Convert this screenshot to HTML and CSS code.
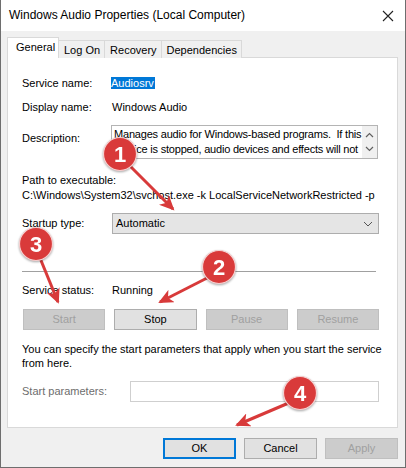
FILE: index.html
```html
<!doctype html>
<html>
  <head>
    <meta charset="utf-8">
    <title>Windows Audio Properties (Local Computer)</title>
    <link rel="stylesheet" href="styles.css">
  </head>
  <body>
    <div class="window">
      <div class="titlebar">
        <span class="title">Windows Audio Properties (Local Computer)</span>
        <svg class="close" width="12" height="12" viewBox="0 0 12 12">
          <path d="M1 1L11 11M11 1L1 11" stroke="#222" stroke-width="1.1" fill="none"/>
        </svg>
      </div>

      <div class="client">
        <div class="tabs">
          <div class="tab selected">General</div>
          <div class="tab">Log On</div>
          <div class="tab">Recovery</div>
          <div class="tab">Dependencies</div>
        </div>

        <div class="panel">
          <div class="row row-name">
            <span class="label">Service name:</span>
            <span class="value"><span class="selection">Audiosrv</span></span>
          </div>
          <div class="row row-display">
            <span class="label">Display name:</span>
            <span class="value">Windows Audio</span>
          </div>
          <div class="row row-desc">
            <span class="label">Description:</span>
            <div class="textbox">
              <div class="textbox-text">
                Manages audio for Windows-based programs.&nbsp; If this<br>
                service is stopped, audio devices and effects will not
              </div>
              <div class="scrollbar">
                <svg width="9" height="6" viewBox="0 0 9 6"><path d="M1 5L4.5 1.5L8 5" stroke="#606060" stroke-width="1.2" fill="none"/></svg>
                <svg width="9" height="6" viewBox="0 0 9 6"><path d="M1 1L4.5 4.5L8 1" stroke="#606060" stroke-width="1.2" fill="none"/></svg>
              </div>
            </div>
          </div>
          <div class="path-label">Path to executable:</div>
          <div class="path-value">C:\Windows\System32\svchost.exe -k LocalServiceNetworkRestricted -p</div>
          <div class="row row-startup">
            <span class="label">Startup type:</span>
            <div class="combo">
              <span>Automatic</span>
              <svg width="10" height="6" viewBox="0 0 10 6"><path d="M1 1L5 5L9 1" stroke="#555" stroke-width="1" fill="none"/></svg>
            </div>
          </div>
          <div class="separator"></div>
          <div class="row row-status">
            <span class="label">Service status:</span>
            <span class="value">Running</span>
          </div>
          <div class="service-buttons">
            <button class="btn" disabled>Start</button>
            <button class="btn">Stop</button>
            <button class="btn" disabled>Pause</button>
            <button class="btn" disabled>Resume</button>
          </div>
          <p class="hint">You can specify the start parameters that apply when you start the service<br>from here.</p>
          <div class="row row-params">
            <span class="label muted">Start parameters:</span>
            <div class="params-input"></div>
          </div>
        </div>

        <div class="dialog-buttons">
          <button class="btn default">OK</button>
          <button class="btn">Cancel</button>
          <button class="btn" disabled>Apply</button>
        </div>
      </div>

      <svg class="callouts" width="406" height="468" viewBox="0 0 406 468">
        <defs>
          <marker id="head" markerUnits="userSpaceOnUse" markerWidth="16" markerHeight="14" refX="13" refY="7" orient="auto">
            <path d="M0 0L15 7L0 14L4 7Z" fill="#d83a3a"/>
          </marker>
        </defs>
        <g stroke="#d83a3a" stroke-width="3" fill="none" marker-end="url(#head)">
          <line x1="128" y1="165" x2="172" y2="209"/>
          <line x1="210" y1="276" x2="159" y2="302"/>
          <line x1="39" y1="258" x2="57" y2="302"/>
          <line x1="290" y1="402" x2="236" y2="425"/>
        </g>
        <g class="badge">
          <circle cx="119" cy="154" r="16.5"/>
          <text x="119" y="162">1</text>
        </g>
        <g class="badge">
          <circle cx="218" cy="267" r="16.5"/>
          <text x="218" y="275">2</text>
        </g>
        <g class="badge">
          <circle cx="35" cy="244" r="16.5"/>
          <text x="35" y="252">3</text>
        </g>
        <g class="badge">
          <circle cx="299" cy="393" r="16.5"/>
          <text x="299" y="401">4</text>
        </g>
      </svg>
    </div>
  </body>
</html>
```

FILE: styles.css
```css
* {
  box-sizing: border-box;
}

body {
  margin: 0;
  font: 11px/15px "Liberation Sans", Arial, sans-serif;
  color: #000;
  background: #fff;
}

.window {
  position: relative;
  width: 406px;
  height: 468px;
  border: 1px solid #6e6e6e;
  border-top: none;
  background: #f0f0f0;
  overflow: hidden;
}

.titlebar {
  height: 31px;
  background: #fff;
  display: flex;
  align-items: center;
  justify-content: space-between;
  padding: 0 11px 0 8px;
}

.title {
  font-size: 12px;
  padding-bottom: 1px;
}

.client {
  padding: 6px 7px 0 6px;
}

.tabs {
  display: flex;
  align-items: flex-end;
  height: 21px;
  margin-bottom: -1px;
  position: relative;
  z-index: 1;
}

.tab {
  height: 18px;
  line-height: 18px;
  padding: 0 4px 0 5px;
  border: 1px solid #d9d9d9;
  border-bottom: none;
  border-left: none;
  background: #f0f0f0;
}

.tab.selected {
  height: 21px;
  line-height: 19px;
  width: 52px;
  padding: 0 0 0 8px;
  background: #fff;
  border-left: 1px solid #d9d9d9;
}

.panel {
  height: 371px;
  background: #fff;
  border: 1px solid #d9d9d9;
  padding: 18px 18px 0 14px;
}

.row {
  display: flex;
  align-items: center;
}

.label {
  width: 90px;
  flex: none;
}

.muted {
  color: #6d6d6d;
}

.selection {
  background: #0078d7;
  color: #fff;
  padding: 0 1px 0 0;
  margin-left: -1px;
}

.row-display {
  margin-top: 9px;
}

.row-desc {
  margin-top: 10px;
  align-items: flex-start;
}

.row-desc .label {
  margin-top: 6px;
}

.textbox {
  display: flex;
  width: 267px;
  height: 34px;
  border: 1px solid #b4b4b4;
  margin-left: -1px;
}

.textbox-text {
  flex: 1;
  padding: 1px 0 0 2px;
  white-space: nowrap;
  overflow: hidden;
  letter-spacing: -0.2px;
}

.scrollbar {
  width: 15px;
  background: #f0f0f0;
  display: flex;
  flex-direction: column;
  align-items: center;
  justify-content: space-around;
  padding: 2px 0;
}

.path-label {
  margin-top: 14px;
}

.path-value {
  white-space: nowrap;
}

.combo {
  flex: 1;
  height: 21px;
  border: 1px solid #adadad;
  background: #e5e5e5;
  display: flex;
  align-items: center;
  justify-content: space-between;
  padding: 0 5px 0 3px;
}

.row-startup {
  margin-top: 10px;
}

.separator {
  height: 1px;
  background: #a0a0a0;
  margin: 37px 3px 0 0;
}

.row-status {
  margin-top: 11px;
}

.service-buttons {
  display: grid;
  grid-template-columns: repeat(4, 1fr);
  gap: 9px;
  margin-top: 11px;
  padding-left: 1px;
}

.btn {
  height: 21px;
  font: inherit;
  color: #000;
  background: #e1e1e1;
  border: 1px solid #adadad;
  padding: 0;
}

.btn[disabled] {
  background: #cccccc;
  border-color: #bfbfbf;
  color: #a0a0a0;
}

.btn.default {
  border: 2px solid #0078d7;
}

.hint {
  margin: 12px 0 0;
  line-height: 14px;
  white-space: nowrap;
}

.row-params {
  margin-top: 11px;
}

.row-params .label {
  width: 108px;
}

.params-input {
  flex: 1;
  height: 21px;
  border: 1px solid #cfcfcf;
}

.dialog-buttons {
  display: grid;
  grid-template-columns: repeat(3, 73px);
  gap: 8px;
  justify-content: end;
  margin-top: 10px;
}

.callouts {
  position: absolute;
  left: 0;
  top: 0;
  pointer-events: none;
}

.badge {
  filter: drop-shadow(0 1px 1px rgba(0, 0, 0, 0.35));
}

.badge circle {
  fill: #d93a3a;
  stroke: #f6d0d0;
  stroke-width: 1.2;
}

.badge text {
  fill: #fff;
  font: bold 22px "Liberation Sans", Arial, sans-serif;
  text-anchor: middle;
}
```
